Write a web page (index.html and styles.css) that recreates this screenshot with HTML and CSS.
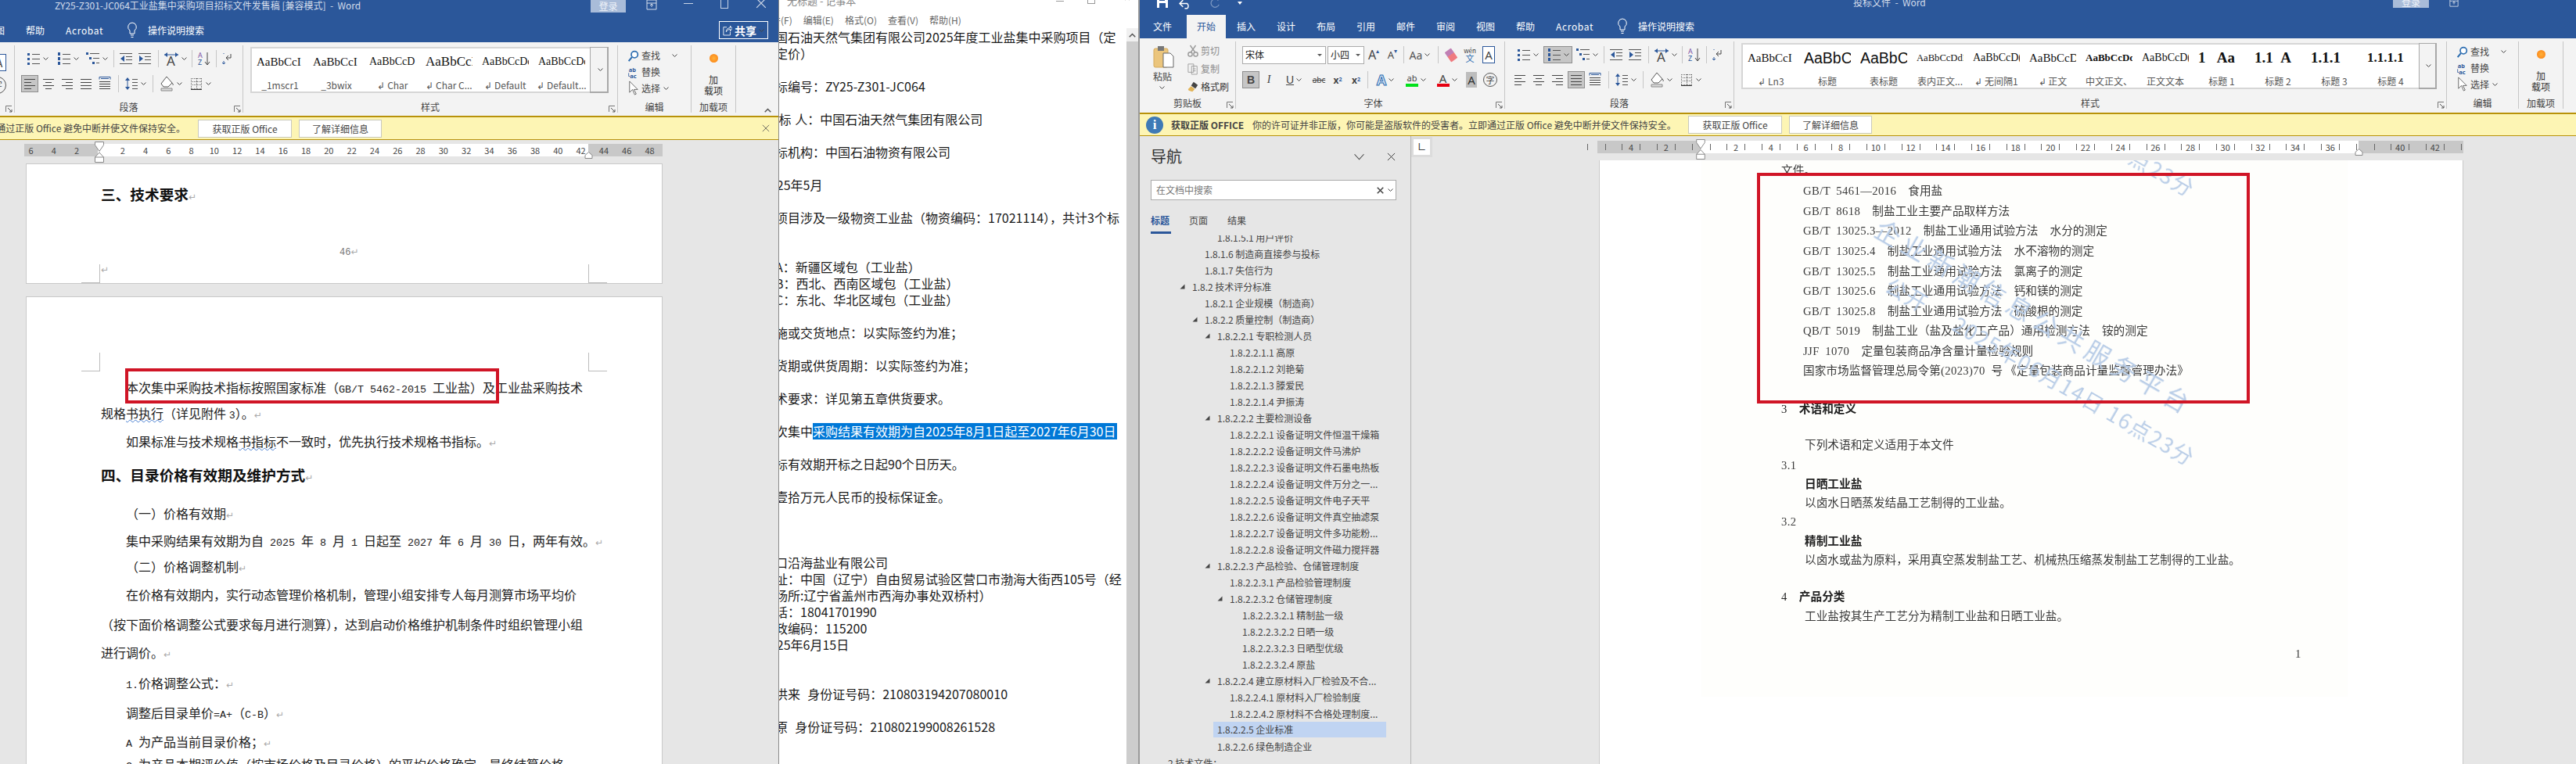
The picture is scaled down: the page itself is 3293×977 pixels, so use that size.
FILE: index.html
```html
<!DOCTYPE html>
<html lang="zh-CN">
<head>
<meta charset="utf-8">
<title>Word 与记事本</title>
<link rel="stylesheet" href="styles.css">
</head>
<body>
<svg class="defs" xmlns="http://www.w3.org/2000/svg">
  <symbol id="ch" viewBox="0 0 7 4"><path d="M.5.5 3.5 3.5 6.5.5" fill="none" stroke="#444" stroke-width="1"/></symbol>
  <symbol id="bul" viewBox="0 0 18 18"><g fill="#2b579a"><rect x="1" y="2" width="3" height="3"/><rect x="1" y="8" width="3" height="3"/><rect x="1" y="14" width="3" height="3"/></g><path d="M7 3.5h10M7 9.5h10M7 15.5h10" stroke="#555"/></symbol>
  <symbol id="num" viewBox="0 0 18 18"><g fill="#2b579a"><rect x="1" y="1" width="3" height="4"/><rect x="1" y="7" width="3" height="4"/><rect x="1" y="13" width="3" height="4"/></g><path d="M7 3.5h10M7 9.5h10M7 15.5h10" stroke="#555"/></symbol>
  <symbol id="mul" viewBox="0 0 18 18"><g fill="#2b579a"><rect x="0" y="1" width="3" height="3"/><rect x="4" y="7" width="3" height="3"/><rect x="8" y="13" width="3" height="3"/></g><path d="M5 2.5h12M9 8.5h8M13 14.5h4" stroke="#555"/></symbol>
  <symbol id="ind1" viewBox="0 0 18 18"><path d="M1 2.5h16M9 6.5h8M9 10.5h8M1 15.5h16" stroke="#555"/><path d="M7 5v8L2 9z" fill="#2b579a"/></symbol>
  <symbol id="ind2" viewBox="0 0 18 18"><path d="M1 2.5h16M9 6.5h8M9 10.5h8M1 15.5h16" stroke="#555"/><path d="M2 5v8l5-4z" fill="#2b579a"/></symbol>
  <symbol id="al" viewBox="0 0 18 18"><path d="M2 3.5h14M2 7.5h9M2 11.5h14M2 15.5h9" stroke="#444"/></symbol>
  <symbol id="ac" viewBox="0 0 18 18"><path d="M2 3.5h14M5 7.5h8M2 11.5h14M5 15.5h8" stroke="#444"/></symbol>
  <symbol id="ar" viewBox="0 0 18 18"><path d="M2 3.5h14M7 7.5h9M2 11.5h14M7 15.5h9" stroke="#444"/></symbol>
  <symbol id="aj" viewBox="0 0 18 18"><path d="M2 3.5h14M2 7.5h14M2 11.5h14M2 15.5h14" stroke="#444"/></symbol>
  <symbol id="ad" viewBox="0 0 18 18"><path d="M2 .5h14v3M2 .5v3" stroke="#2b579a" fill="none"/><path d="M2 6.5h14M2 9.5h14M2 12.5h14M2 15.5h14" stroke="#444"/><path d="M4 2.5h10" stroke="#2b579a"/></symbol>
  <symbol id="ls" viewBox="0 0 18 18"><path d="M4 2v14" stroke="#2b579a"/><path d="M1 5l3-4 3 4zM1 13l3 4 3-4z" fill="#2b579a"/><path d="M10 3.5h7M10 7.5h7M10 11.5h7M10 15.5h7" stroke="#555"/></symbol>
  <symbol id="sort" viewBox="0 0 18 18"><text x="1" y="8" class="svt sp">A</text><text x="1" y="17" class="svt sb">Z</text><path d="M13 1v15" stroke="#444"/><path d="M10 13l3 4 3-4" fill="none" stroke="#444"/></symbol>
  <symbol id="para" viewBox="0 0 18 18"><path d="M12 3v5H6M6 8l3-3M6 8l3 3" fill="none" stroke="#444"/><path d="M3 12v4M3 16l-2-2M3 16l2-2" fill="none" stroke="#2b579a"/><path d="M3 2v1" stroke="#2b579a"/></symbol>
  <symbol id="dir" viewBox="0 0 20 20"><text x="4" y="19" class="svt dk">A</text><path d="M1 5h18" stroke="#2b579a"/><path d="M5 2 1 5l4 3zM15 2l4 3-4 3z" fill="#2b579a"/></symbol>
  <symbol id="shd" viewBox="0 0 20 20"><path d="M10 1l7 8-5 5H6L3 10z" fill="#fff" stroke="#555"/><path d="M3 16h14v3H3z" fill="#ddd" stroke="#888"/><path d="M17 9q2 2 1 3" stroke="#555" fill="none"/></symbol>
  <symbol id="brd" viewBox="0 0 18 18"><path d="M2 2.5h14M2 6.5h14M2 10.5h14M2 15.5h14M2.5 2v14M9.5 2v14M15.5 2v14" stroke="#666" stroke-dasharray="1 1" fill="none"/><path d="M2 16.5h14" stroke="#333"/></symbol>
  <symbol id="find" viewBox="0 0 18 18"><circle cx="11" cy="7" r="5" fill="#fff" stroke="#2b6cb0" stroke-width="2"/><path d="M7 11 2 17" stroke="#2b6cb0" stroke-width="2.4"/></symbol>
  <symbol id="repl" viewBox="0 0 18 20"><text x="2" y="9" class="svt sv9">ab</text><text x="4" y="19" class="svt sv9">ac</text><path d="M2 11v5h2" fill="none" stroke="#2b579a"/></symbol>
  <symbol id="pick" viewBox="0 0 14 20"><path d="M2 1v15l4-4 3 7 2-1-3-6h5z" fill="#fff" stroke="#666"/></symbol>
  <symbol id="bulb" viewBox="0 0 14 22"><path d="M7 1a5.5 5.5 0 0 1 3 10v4H4v-4A5.5 5.5 0 0 1 7 1zM5 17h4M5.5 19.5h3" fill="none" stroke="#fff"/></symbol>
  <symbol id="lau" viewBox="0 0 9 9"><path d="M.5 8V.5H8" fill="none" stroke="#777"/><path d="M3 3l5 5M8 5v3H5" fill="none" stroke="#555"/></symbol>
  <symbol id="x" viewBox="0 0 12 12"><path d="M1 1l10 10M11 1 1 11" stroke="currentColor" fill="none"/></symbol>
  <symbol id="v" viewBox="0 0 12 12"><path d="M.5 3 6 9l5.5-6" stroke="currentColor" fill="none"/></symbol>
  <symbol id="up" viewBox="0 0 12 8"><path d="M1 7l5-5 5 5" stroke="currentColor" stroke-width="2" fill="none"/></symbol>
  <symbol id="tri" viewBox="0 0 7 7"><path d="M6.500 .5v6H.5z" fill="#444"/></symbol>
  <symbol id="hour" viewBox="0 0 12 27"><path d="M.5.5h11v4L6 12.500.5 4.500zM6 14l5.500 6v6.500H.5V20z" fill="#fff" stroke="#888"/><path d="M.5 20h11" stroke="#888"/></symbol>
  <symbol id="tab" viewBox="0 0 10 9"><path d="M5 .5 9.500 4.500v4h-9v-4z" fill="#fff" stroke="#888"/></symbol>
  <symbol id="paste" viewBox="0 0 28 29"><rect x="1" y="4" width="18" height="24" rx="2" fill="#ebc57c" stroke="#d4a95a"/><rect x="6" y="1" width="8" height="6" fill="#777"/><path d="M13 10h9l4 4v14H13z" fill="#fff" stroke="#666"/></symbol>
  <symbol id="cut" viewBox="0 0 16 18"><path d="M4 1l7 10M12 1 5 11" stroke="#999" stroke-width="1.6"/><circle cx="4" cy="14" r="3" fill="none" stroke="#999" stroke-width="1.6"/><circle cx="12" cy="14" r="3" fill="none" stroke="#999" stroke-width="1.6"/></symbol>
  <symbol id="copy" viewBox="0 0 16 18"><path d="M1 2h8v12H1zM6 5h8v12H6z" fill="#f3f3f3" stroke="#999"/><path d="M8 9h4M8 12h4" stroke="#999"/></symbol>
  <symbol id="brush" viewBox="0 0 18 18"><path d="M10 1l7 5-4 6-7-5z" fill="#444"/><path d="M6 8l6 5-4 4-6-2-1-2z" fill="#e2b458"/></symbol>
  <symbol id="save" viewBox="0 0 16 16"><path d="M1 1h11l3 3v11H1z" fill="#fff"/><path d="M4 1h7v5H4zM4 9h8v6H4z" fill="#2b579a"/></symbol>
  <symbol id="undo" viewBox="0 0 16 12"><path d="M5 1 1 5l4 4M1 5h9a4 4 0 0 1 0 6H7" fill="none" stroke="#fff" stroke-width="1.400"/></symbol>
  <symbol id="redo" viewBox="0 0 16 14"><path d="M13 2a6 6 0 1 0 1 6" fill="none" stroke="#7e9ac4" stroke-width="1.400"/></symbol>
  <symbol id="share" viewBox="0 0 14 16"><path d="M6 3H1v12h10v-5" fill="none" stroke="#fff"/><path d="M5 10c0-4 3-6 6-6V1l3 4-3 4V6C9 6 7 7 5 10z" fill="none" stroke="#fff"/></symbol>
  <symbol id="winrest" viewBox="0 0 14 14"><path d="M1 1h12v12H1zM1 5h12" fill="none" stroke="#d5deeb"/><path d="M7 10V6M5 8l2-2 2 2" fill="none" stroke="#d5deeb"/></symbol>
</svg>

<!-- 左侧 Word 窗口 -->
<section class="win wleft">
  <div class="ttl ttl-l">
    <span class="doc-name">ZY25-Z301-JC064工业盐集中采购项目招标文件发售稿 [兼容模式]  -  Word</span>
    <span class="login">登录</span>
    <svg class="ctl c-rest"><use href="#winrest"/></svg>
    <i class="ctl-min"></i>
    <i class="ctl-max"></i>
    <svg class="ctl c-x"><use href="#x"/></svg>
  </div>
  <div class="tabs tabs-l">
    <span class="tab t-cut">视图</span>
    <span class="tab">帮助</span>
    <span class="tab acro">Acrobat</span>
    <svg class="bulb"><use href="#bulb"/></svg>
    <span class="tell">操作说明搜索</span>
    <span class="sharebtn"><svg class="shi"><use href="#share"/></svg><b>共享</b><svg class="shc"><use href="#ch"/></svg></span>
  </div>
  <div class="ribbon">
    <div class="grp g-cut">
      <span class="cutbox">A</span>
      <span class="cutcirc">字</span>
      <svg class="lau"><use href="#lau"/></svg>
    </div>
    <div class="grp g-para">
      <div class="r r1">
        <span class="b w40"><svg class="ic"><use href="#bul"/></svg><svg class="chv"><use href="#ch"/></svg></span>
        <span class="b w37"><svg class="ic"><use href="#num"/></svg><svg class="chv"><use href="#ch"/></svg></span>
        <span class="b w37"><svg class="ic"><use href="#mul"/></svg><svg class="chv"><use href="#ch"/></svg></span>
        <i class="sep s7"></i>
        <span class="b w24"><svg class="ic"><use href="#ind1"/></svg></span>
        <span class="b w24"><svg class="ic"><use href="#ind2"/></svg></span>
        <i class="sep s10"></i>
        <span class="b w33"><svg class="ic20"><use href="#dir"/></svg><svg class="chv"><use href="#ch"/></svg></span>
        <i class="sep s11"></i>
        <span class="b w20"><svg class="ic"><use href="#sort"/></svg></span>
        <i class="sep s11"></i>
        <span class="b w20"><svg class="ic"><use href="#para"/></svg></span>
      </div>
      <div class="r r2">
        <span class="b w24"><span class="selbox"><svg class="ic"><use href="#al"/></svg></span></span>
        <span class="b w24"><svg class="ic"><use href="#ac"/></svg></span>
        <span class="b w24"><svg class="ic"><use href="#ar"/></svg></span>
        <span class="b w24"><svg class="ic"><use href="#aj"/></svg></span>
        <span class="b w24"><svg class="ic"><use href="#ad"/></svg></span>
        <i class="sep s10"></i>
        <span class="b w34"><svg class="ic"><use href="#ls"/></svg><svg class="chv"><use href="#ch"/></svg></span>
        <i class="sep s10"></i>
        <span class="b w35"><svg class="ic20"><use href="#shd"/></svg><svg class="chv"><use href="#ch"/></svg></span>
        <i class="gap4"></i>
        <span class="b w33"><svg class="ic"><use href="#brd"/></svg><svg class="chv"><use href="#ch"/></svg></span>
      </div>
      <div class="lab">段落</div>
      <svg class="lau"><use href="#lau"/></svg>
    </div>
    <div class="grp g-styles-l">
      <div class="gal">
        <div class="it"><span class="smp">AaBbCcI</span><span class="cap">_1mscr1</span></div>
        <div class="it"><span class="smp">AaBbCcI</span><span class="cap">_3bwix</span></div>
        <div class="it"><span class="smp sm14">AaBbCcD</span><span class="cap">↲ Char</span></div>
        <div class="it"><span class="smp sm17">AaBbCcI</span><span class="cap">↲ Char C...</span></div>
        <div class="it"><span class="smp sm14">AaBbCcDc</span><span class="cap">↲ Default</span></div>
        <div class="it"><span class="smp sm14">AaBbCcDd</span><span class="cap">↲ Default...</span></div>
        <div class="gscroll"><svg class="chv"><use href="#ch"/></svg></div>
      </div>
      <div class="lab">样式</div>
      <svg class="lau"><use href="#lau"/></svg>
    </div>
    <div class="grp g-edit-l">
      <div class="ed">
        <div class="edr"><svg class="edi"><use href="#find"/></svg><span>查找</span><svg class="chv ec1"><use href="#ch"/></svg></div>
        <div class="edr"><svg class="edi"><use href="#repl"/></svg><span>替换</span></div>
        <div class="edr"><svg class="edi"><use href="#pick"/></svg><span>选择</span><svg class="chv"><use href="#ch"/></svg></div>
      </div>
      <div class="lab">编辑</div>
    </div>
    <div class="grp g-add">
      <div class="addin"><i class="dot"></i><span>加</span><span>载项</span></div>
      <div class="lab">加载项</div>
    </div>
    <svg class="collapse"><use href="#up"/></svg>
  </div>
  <div class="notice n-l">
    <div class="nmsg-l"><span>立即通过正版 Office 避免中断并使文件保持安全。</span></div>
    <span class="nbtn nb1">获取正版 Office</span>
    <span class="nbtn nb2">了解详细信息</span>
    <svg class="nx"><use href="#x"/></svg>
  </div>
  <div class="doc-l">
    <div class="ruler rul-l">
      <div class="cells cl">
        <span>6</span><span>4</span><span>2</span><span></span><span>2</span><span>4</span><span>6</span><span>8</span><span>10</span><span>12</span><span>14</span><span>16</span><span>18</span><span>20</span><span>22</span><span>24</span><span>26</span><span>28</span><span>30</span><span>32</span><span>34</span><span>36</span><span>38</span><span>40</span><span>42</span><span>44</span><span>46</span><span>48</span>
      </div>
      <svg class="hour hl"><use href="#hour"/></svg>
      <svg class="tabm tl"><use href="#tab"/></svg>
    </div>
    <div class="page p1">
      <div class="h18">三、技术要求<span class="r-m">↵</span></div>
      <div class="pnum">46<span class="r-m">↵</span></div>
      <div class="pret"><span class="r-m">↵</span></div>
      <i class="crop c-tl"></i><i class="crop c-tr"></i>
    </div>
    <div class="page p2">
      <i class="crop c-bl"></i><i class="crop c-br"></i>
      <div class="ls">
        <p class="ind">本次集中采购技术指标按照国家标准（<span class="m">GB/T 5462-2015 </span>工业盐）及工业盐采购技术</p>
        <p>规格<u>书执行</u>（详见附件 <span class="m">3</span>）。<span class="r-m">↵</span></p>
        <p class="ind">如果标准与技术规格<u>书指标</u>不一致时，优先执行技术规格书指标。<span class="r-m">↵</span></p>
        <p class="h18">四、目录价格有效期及维护方式<span class="r-m">↵</span></p>
        <p class="ind">（一）价格有效期<span class="r-m">↵</span></p>
        <p class="ind">集中采购结果有效期为自<span class="m"> 2025 </span>年<span class="m"> 8 </span>月<span class="m"> 1 </span>日起至<span class="m"> 2027 </span>年<span class="m"> 6 </span>月<span class="m"> 30 </span>日，两年有效。<span class="r-m">↵</span></p>
        <p class="ind">（二）价格调整机制<span class="r-m">↵</span></p>
        <p class="ind">在价格有效期内，实行动态管理价格机制，管理小组安排专人每月测算市场平均价</p>
        <p>（按下面价格调整公式要求每月进行测算），达到启动价格维护机制条件时组织管理小组</p>
        <p>进行调价。<span class="r-m">↵</span></p>
        <p class="ind"><span class="m">1.</span>价格调整公式：<span class="r-m">↵</span></p>
        <p class="ind">调整后目录单价<span class="m">=A+</span>（<span class="m">C-B</span>）<span class="r-m">↵</span></p>
        <p class="ind"><span class="m">A </span>为产品当前目录价格；<span class="r-m">↵</span></p>
        <p class="ind"><span class="m">C </span>为产品本期评价值（按市场价格及目录价格）的平均价格确定，最终结算价格</p>
      </div>
      <div class="redbox rb-l"></div>
    </div>
  </div>
</section>

<!-- 记事本 -->
<section class="win wnote">
  <div class="ntitle">
    <span class="ntxt">无标题 - 记事本</span>
    <i class="nmin"></i><i class="nmax"></i>
    <svg class="nclose"><use href="#x"/></svg>
  </div>
  <div class="nmenu"><span class="mcut">文件(F)</span><span>编辑(E)</span><span>格式(O)</span><span>查看(V)</span><span>帮助(H)</span></div>
  <div class="nbody">
    <div class="ntext"><pre class="npre">中国石油天然气集团有限公司2025年度工业盐集中采购项目（定
额定价）

招标编号：ZY25-Z301-JC064

招 标 人：中国石油天然气集团有限公司

招标机构：中国石油物资有限公司

2025年5月

本项目涉及一级物资工业盐（物资编码：17021114），共计3个标


包A：新疆区域包（工业盐）
包B：西北、西南区域包（工业盐）
包C：东北、华北区域包（工业盐）

实施或交货地点：以实际签约为准；

交货期或供货周期：以实际签约为准；

技术要求：详见第五章供货要求。

本次集中<span class="npsel">采购结果有效期为自2025年8月1日起至2027年6月30日</span>

投标有效期开标之日起90个日历天。

交壹拾万元人民币的投标保证金。



营口沿海盐业有限公司
地址：中国（辽宁）自由贸易试验区营口市渤海大街西105号（经
营场所:辽宁省盖州市西海办事处双桥村）
电话：18041701990
邮政编码：115200
2025年6月15日


王洪来  身份证号码：210803194207080010

高原  身份证号码：210802199008261528</pre></div>
    <div class="nscroll"><div class="nup"><svg class="nupi"><use href="#up"/></svg></div></div>
  </div>
</section>

<!-- 右侧 Word 窗口 -->
<section class="win wright">
  <div class="ttl ttl-r">
    <svg class="qsave"><use href="#save"/></svg>
    <svg class="qundo"><use href="#undo"/></svg>
    <svg class="qredo"><use href="#redo"/></svg>
    <i class="qdrop"></i>
    <span class="doc-name2">投标文件  -  Word</span>
    <span class="login2">登录</span>
    <svg class="ctl2"><use href="#winrest"/></svg>
  </div>
  <div class="tabs tabs-r">
    <span class="tab t-file">文件</span>
    <span class="tab active">开始</span>
    <span class="tab">插入</span><span class="tab">设计</span><span class="tab">布局</span><span class="tab">引用</span><span class="tab">邮件</span><span class="tab">审阅</span><span class="tab">视图</span><span class="tab">帮助</span>
    <span class="tab acro">Acrobat</span>
    <svg class="bulb"><use href="#bulb"/></svg>
    <span class="tell">操作说明搜索</span>
  </div>
  <div class="ribbon rib-r">
    <div class="grp g-clip">
      <div class="clip">
        <div class="pastec">
          <svg class="pasteic"><use href="#paste"/></svg>
          <span class="pastet">粘贴</span>
          <svg class="chv pastech"><use href="#ch"/></svg>
        </div>
        <div class="clipc">
          <div class="cr dis"><svg class="ci"><use href="#cut"/></svg>剪切</div>
          <div class="cr dis"><svg class="ci"><use href="#copy"/></svg>复制</div>
          <div class="cr"><svg class="ci"><use href="#brush"/></svg>格式刷</div>
        </div>
      </div>
      <div class="lab">剪贴板</div>
      <svg class="lau"><use href="#lau"/></svg>
    </div>
    <div class="grp g-font">
      <div class="r fr1">
        <span class="fbox fb1"><span>宋体</span><i class="tridown"></i></span>
        <span class="fbox fb2"><span>小四</span><i class="tridown"></i></span>
        <span class="b w24"><span class="fa a-g">A<sup>▴</sup></span></span>
        <span class="b w24"><span class="fa a-s">A<sup>▾</sup></span></span>
        <i class="sep s4"></i>
        <span class="b w38"><span class="aa">Aa</span><svg class="chv"><use href="#ch"/></svg></span>
        <i class="sep s9"></i>
        <span class="b w24"><i class="eraser"></i></span>
        <span class="b w24"><span class="wen"><small>wén</small>文</span></span>
        <span class="b w24"><span class="boxa">A</span></span>
      </div>
      <div class="r fr2">
        <span class="b w22"><span class="selbox fs">B</span></span>
        <span class="b w24 ft i">I</span>
        <span class="b w40"><span class="ft un">U</span><svg class="chv"><use href="#ch"/></svg></span>
        <span class="b w24"><span class="st">abc</span></span>
        <span class="b w24 ft2">x<sub>2</sub></span>
        <span class="b w23 ft2">x<sup>2</sup></span>
        <i class="sep s7"></i>
        <span class="b w38"><span class="aglow">A</span><svg class="chv"><use href="#ch"/></svg></span>
        <span class="b w40"><span class="hilite">ab<i class="gb"></i></span><svg class="chv"><use href="#ch"/></svg></span>
        <span class="b w39"><span class="hired">A<i class="rb"></i></span><svg class="chv"><use href="#ch"/></svg></span>
        <span class="b w24"><span class="shadea">A</span></span>
        <span class="b w24"><span class="circ">字</span></span>
      </div>
      <div class="lab">字体</div>
      <svg class="lau"><use href="#lau"/></svg>
    </div>
    <div class="grp g-para g-para-r">
      <div class="r r1">
        <span class="b w40"><svg class="ic"><use href="#bul"/></svg><svg class="chv"><use href="#ch"/></svg></span>
        <span class="b w37"><span class="selbox sb2"><svg class="ic"><use href="#num"/></svg><svg class="chv"><use href="#ch"/></svg></span></span>
        <span class="b w37"><svg class="ic"><use href="#mul"/></svg><svg class="chv"><use href="#ch"/></svg></span>
        <i class="sep s7"></i>
        <span class="b w24"><svg class="ic"><use href="#ind1"/></svg></span>
        <span class="b w24"><svg class="ic"><use href="#ind2"/></svg></span>
        <i class="sep s10"></i>
        <span class="b w33"><svg class="ic20"><use href="#dir"/></svg><svg class="chv"><use href="#ch"/></svg></span>
        <i class="sep s11"></i>
        <span class="b w20"><svg class="ic"><use href="#sort"/></svg></span>
        <i class="sep s11"></i>
        <span class="b w20"><svg class="ic"><use href="#para"/></svg></span>
      </div>
      <div class="r r2">
        <span class="b w24"><svg class="ic"><use href="#al"/></svg></span>
        <span class="b w24"><svg class="ic"><use href="#ac"/></svg></span>
        <span class="b w24"><svg class="ic"><use href="#ar"/></svg></span>
        <span class="b w24"><span class="selbox"><svg class="ic"><use href="#aj"/></svg></span></span>
        <span class="b w24"><svg class="ic"><use href="#ad"/></svg></span>
        <i class="sep s10"></i>
        <span class="b w34"><svg class="ic"><use href="#ls"/></svg><svg class="chv"><use href="#ch"/></svg></span>
        <i class="sep s10"></i>
        <span class="b w35"><svg class="ic20"><use href="#shd"/></svg><svg class="chv"><use href="#ch"/></svg></span>
        <i class="gap4"></i>
        <span class="b w33"><svg class="ic"><use href="#brd"/></svg><svg class="chv"><use href="#ch"/></svg></span>
      </div>
      <div class="lab">段落</div>
      <svg class="lau"><use href="#lau"/></svg>
    </div>
    <div class="grp g-styles-r">
      <div class="gal">
        <div class="it"><span class="smp">AaBbCcI</span><span class="cap">↲ Ln3</span></div>
        <div class="it"><span class="smp sm20">AaBbC(</span><span class="cap">标题</span></div>
        <div class="it"><span class="smp sm20">AaBbC</span><span class="cap">表标题</span></div>
        <div class="it"><span class="smp sm12">AaBbCcDdI</span><span class="cap">表内正文...</span></div>
        <div class="it"><span class="smp sm14">AaBbCcD(</span><span class="cap">↲ 无间隔1</span></div>
        <div class="it"><span class="smp sm15">AaBbCcD</span><span class="cap">↲ 正文</span></div>
        <div class="it"><span class="smp sm12b">AaBbCcDd</span><span class="cap">中文正文、</span></div>
        <div class="it"><span class="smp sm14">AaBbCcD(</span><span class="cap">正文文本</span></div>
        <div class="it"><span class="smp sm19">1 &nbsp;&nbsp;Aa</span><span class="cap">标题 1</span></div>
        <div class="it"><span class="smp sm19">1.1 &nbsp;A</span><span class="cap">标题 2</span></div>
        <div class="it"><span class="smp sm19">1.1.1</span><span class="cap">标题 3</span></div>
        <div class="it"><span class="smp sm17b">1.1.1.1</span><span class="cap">标题 4</span></div>
        <div class="gscroll"><svg class="chv"><use href="#ch"/></svg></div>
      </div>
      <div class="lab">样式</div>
      <svg class="lau"><use href="#lau"/></svg>
    </div>
    <div class="grp g-edit-r">
      <div class="ed">
        <div class="edr"><svg class="edi"><use href="#find"/></svg><span>查找</span><svg class="chv ec1"><use href="#ch"/></svg></div>
        <div class="edr"><svg class="edi"><use href="#repl"/></svg><span>替换</span></div>
        <div class="edr"><svg class="edi"><use href="#pick"/></svg><span>选择</span><svg class="chv"><use href="#ch"/></svg></div>
      </div>
      <div class="lab">编辑</div>
    </div>
    <div class="grp g-add">
      <div class="addin"><i class="dot"></i><span>加</span><span>载项</span></div>
      <div class="lab">加载项</div>
    </div>
  </div>
  <div class="notice n-r">
    <span class="info">i</span>
    <b class="ntitle-b">获取正版 OFFICE</b>
    <span class="nmsg-r">你的许可证并非正版，你可能是盗版软件的受害者。立即通过正版 Office 避免中断并使文件保持安全。</span>
    <span class="nbtn nb1">获取正版 Office</span>
    <span class="nbtn nb2">了解详细信息</span>
  </div>
  <div class="rmain">
    <aside class="nav">
      <div class="navh"><span class="navt">导航</span><svg class="navv"><use href="#v"/></svg><svg class="navx"><use href="#x"/></svg></div>
      <div class="navs"><span>在文档中搜索</span><svg class="navsx"><use href="#x"/></svg><svg class="chv"><use href="#ch"/></svg></div>
      <div class="navtabs"><span class="on">标题</span><span>页面</span><span>结果</span></div>
      <div class="tree">
        <div class="row l5 first"><i class="slot"></i>1.8.1.5.1 用户评价</div>
        <div class="row l4"><i class="slot"></i>1.8.1.6 制造商直接参与投标</div>
        <div class="row l4"><i class="slot"></i>1.8.1.7 失信行为</div>
        <div class="row l3"><i class="slot"><svg class="tr"><use href="#tri"/></svg></i>1.8.2 技术评分标准</div>
        <div class="row l4"><i class="slot"></i>1.8.2.1 企业规模（制造商）</div>
        <div class="row l4"><i class="slot"><svg class="tr"><use href="#tri"/></svg></i>1.8.2.2 质量控制（制造商）</div>
        <div class="row l5"><i class="slot"><svg class="tr"><use href="#tri"/></svg></i>1.8.2.2.1 专职检测人员</div>
        <div class="row l6"><i class="slot"></i>1.8.2.2.1.1 高原</div>
        <div class="row l6"><i class="slot"></i>1.8.2.2.1.2 刘艳菊</div>
        <div class="row l6"><i class="slot"></i>1.8.2.2.1.3 滕爱民</div>
        <div class="row l6"><i class="slot"></i>1.8.2.2.1.4 尹振涛</div>
        <div class="row l5"><i class="slot"><svg class="tr"><use href="#tri"/></svg></i>1.8.2.2.2 主要检测设备</div>
        <div class="row l6"><i class="slot"></i>1.8.2.2.2.1 设备证明文件恒温干燥箱</div>
        <div class="row l6"><i class="slot"></i>1.8.2.2.2.2 设备证明文件马沸炉</div>
        <div class="row l6"><i class="slot"></i>1.8.2.2.2.3 设备证明文件石墨电热板</div>
        <div class="row l6"><i class="slot"></i>1.8.2.2.2.4 设备证明文件万分之一...</div>
        <div class="row l6"><i class="slot"></i>1.8.2.2.2.5 设备证明文件电子天平</div>
        <div class="row l6"><i class="slot"></i>1.8.2.2.2.6 设备证明文件真空抽滤泵</div>
        <div class="row l6"><i class="slot"></i>1.8.2.2.2.7 设备证明文件多功能粉...</div>
        <div class="row l6"><i class="slot"></i>1.8.2.2.2.8 设备证明文件磁力搅拌器</div>
        <div class="row l5"><i class="slot"><svg class="tr"><use href="#tri"/></svg></i>1.8.2.2.3 产品检验、仓储管理制度</div>
        <div class="row l6"><i class="slot"></i>1.8.2.2.3.1 产品检验管理制度</div>
        <div class="row l6"><i class="slot"><svg class="tr"><use href="#tri"/></svg></i>1.8.2.2.3.2 仓储管理制度</div>
        <div class="row l7"><i class="slot"></i>1.8.2.2.3.2.1 精制盐一级</div>
        <div class="row l7"><i class="slot"></i>1.8.2.2.3.2.2 日晒一级</div>
        <div class="row l7"><i class="slot"></i>1.8.2.2.3.2.3 日晒型优级</div>
        <div class="row l7"><i class="slot"></i>1.8.2.2.3.2.4 原盐</div>
        <div class="row l5"><i class="slot"><svg class="tr"><use href="#tri"/></svg></i>1.8.2.2.4 建立原材料入厂检验及不合...</div>
        <div class="row l6"><i class="slot"></i>1.8.2.2.4.1 原材料入厂检验制度</div>
        <div class="row l6"><i class="slot"></i>1.8.2.2.4.2 原材料不合格处理制度...</div>
        <div class="row rsel">1.8.2.2.5 企业标准</div>
        <div class="row l5"><i class="slot"></i>1.8.2.2.6 绿色制造企业</div>
        <div class="row l1"><i class="slot"></i>2 技术文件：</div>
      </div>
    </aside>
    <div class="docw">
      <div class="rtop">
        <span class="tabsel">∟</span>
        <div class="ruler rul-r">
          <div class="cells cr2">
            <span></span><span>4</span><span>2</span><span></span><span>2</span><span>4</span><span>6</span><span>8</span><span>10</span><span>12</span><span>14</span><span>16</span><span>18</span><span>20</span><span>22</span><span>24</span><span>26</span><span>28</span><span>30</span><span>32</span><span>34</span><span>36</span><span></span><span>40</span><span>42</span><span></span>
          </div>
          <svg class="hour hr"><use href="#hour"/></svg>
          <svg class="tabm trm"><use href="#tab"/></svg>
        </div>
      </div>
      <div class="page p3">
        <div class="scanbg"></div>
        <div class="scan">
          <p>文件。</p>
          <p class="i1"><span class="m2">GB/T 5461—2016  </span>食用盐</p>
          <p class="i1"><span class="m2">GB/T 8618  </span>制盐工业主要产品取样方法</p>
          <p class="i1"><span class="m2">GB/T 13025.3—2012  </span>制盐工业通用试验方法<span class="m2">  </span>水分的测定</p>
          <p class="i1"><span class="m2">GB/T 13025.4  </span>制盐工业通用试验方法<span class="m2">  </span>水不溶物的测定</p>
          <p class="i1"><span class="m2">GB/T 13025.5  </span>制盐工业通用试验方法<span class="m2">  </span>氯离子的测定</p>
          <p class="i1"><span class="m2">GB/T 13025.6  </span>制盐工业通用试验方法<span class="m2">  </span>钙和镁的测定</p>
          <p class="i1"><span class="m2">GB/T 13025.8  </span>制盐工业通用试验方法<span class="m2">  </span>硫酸根的测定</p>
          <p class="i1"><span class="m2">QB/T 5019  </span>制盐工业（盐及盐化工产品）通用检测方法<span class="m2">  </span>铵的测定</p>
          <p class="i1"><span class="m2">JJF 1070  </span>定量包装商品净含量计量检验规则</p>
          <p class="i1">国家市场监督管理总局令第<span class="m2">(2023)70 </span>号 《定量包装商品计量监督管理办法》</p>
          <p class="bd"><span class="m2">3  </span>术语和定义</p>
          <p class="i2">下列术语和定义适用于本文件</p>
          <p><span class="m2">3.1</span></p>
          <p class="i2 bd">日晒工业盐</p>
          <p class="i2">以卤水日晒蒸发结晶工艺制得的工业盐。</p>
          <p><span class="m2">3.2</span></p>
          <p class="i2 bd">精制工业盐</p>
          <p class="i2">以卤水或盐为原料，采用真空蒸发制盐工艺、机械热压缩蒸发制盐工艺制得的工业盐。</p>
          <p class="bd"><span class="m2">4  </span>产品分类</p>
          <p class="i2">工业盐按其生产工艺分为精制工业盐和日晒工业盐。</p>
          <p class="pg"><span class="m2">1</span></p>
        </div>
        <div class="wm wm-a">企业新潮信息公共服务平台</div>
        <div class="wm wm-b"><span class="wm-k">公开</span>2025年06月14日 16点23分</div>
        <div class="wm wm-c"><span class="wm-k">公开</span>2025年06月14日 16点23分</div>
        <div class="redbox rb-r"></div>
      </div>
    </div>
  </div>
</section>
</body>
</html>
```
FILE: styles.css
```css
* { box-sizing: border-box; }
html, body { margin: 0; padding: 0; }
body {
  width: 3293px; height: 977px; overflow: hidden; display: flex;
  font: 12px/16px "Noto Sans CJK SC", "Noto Sans", sans-serif; color: #333; background: #e6e6e6;
}
i { font-style: normal; }
.defs { position: absolute; width: 0; height: 0; }
.svt { font-family: "Noto Sans", sans-serif; }
.sp { font-size: 9px; fill: #7a4fa3; }
.sb { font-size: 9px; fill: #2b579a; }
.dk { font-size: 17px; fill: #444; }
.sv9 { font-size: 9px; fill: #2b579a; font-weight: 700; }

.win { height: 977px; display: flex; flex-direction: column; overflow: hidden; flex: none; }
.wleft { width: 996px; border-right: 1px solid #8a8a8a; }
.wnote { width: 461px; background: #fff; border-right: 2px solid #9a9a9a; }
.wright { width: 1836px; }

/* title rows */
.ttl { background: #2b579a; color: #d3dcea; display: flex; overflow: hidden; flex: none; align-items: flex-start; }
.ttl-l { height: 23px; }
.ttl-r { height: 19px; }
.doc-name { margin: -2px 0 0 70px; width: 685px; white-space: pre; line-height: 18px; }
.login { width: 45px; height: 16px; background: #a9bcd9; color: #eef2f8; text-align: center; line-height: 16px; }
.ctl { width: 14px; height: 14px; }
.c-rest { margin: -1px 0 0 26px; }
.ctl-min { width: 12px; height: 1px; background: #c8d4e6; margin: 4px 0 0 34px; }
.ctl-max { width: 10px; height: 11px; border: 1px solid #c8d4e6; border-top: 0; margin: 0 0 0 35px; }
.c-x { margin: -3px 0 0 35px; color: #d3dcea; }
.qsave { width: 16px; height: 16px; margin: -5px 0 0 21px; }
.qundo { width: 17px; height: 13px; margin: -1px 0 0 13px; }
.qredo { width: 14px; height: 14px; margin: -2px 0 0 22px; }
.qdrop { width: 0; height: 0; margin: 2px 0 0 22px; border: 3px solid transparent; border-top: 4px solid #fff; }
.doc-name2 { margin: -6px 0 0 781px; width: 690px; white-space: pre; line-height: 18px; }
.login2 { width: 46px; height: 10px; margin-left: 0; background: #a9bcd9; color: #eef2f8; text-align: center; line-height: 6px; }
.ctl2 { width: 14px; height: 12px; margin: -3px 0 0 25px; }

/* tabs */
.tabs { background: #2b579a; color: #fff; display: flex; align-items: center; flex: none; position: relative; }
.tabs-l { height: 31px; }
.tabs-r { height: 30px; }
.tab { width: 50px; margin-right: 1px; text-align: center; line-height: 30px; flex: none; }
.t-cut { margin-left: -31px; }
.t-file { margin: 0 6px 0 4px; }
.active { background: #f3f3f3; color: #2b579a; }
.acro { width: auto; padding-left: 13px; letter-spacing: .65px; text-align: left; }
.bulb { width: 14px; height: 22px; margin-left: 29px; flex: none; }
.tell { margin-left: 13px; white-space: nowrap; }
.sharebtn {
  position: absolute; left: 919px; top: 4px; width: 63px; height: 23px; border: 1px solid #fff;
  display: flex; align-items: center; font-size: 14px; color: #fff;
}
.shi { width: 12px; height: 14px; margin: 0 3px 0 4px; }
.shc { width: 7px; height: 4px; margin-left: 3px; }
.shc use { color: #fff; }

/* ribbon */
.ribbon { height: 94px; background: #f3f3f3; display: flex; flex: none; position: relative; }
.rib-r { height: 95px; }
.grp {
  height: 86px; margin-top: 4px; padding-top: 1px; border-right: 1px solid #c6c6c6; flex: none;
  display: grid; grid-template-rows: 32px 32px 21px; position: relative; color: #444;
}
.g-cut { width: 19px; }
.g-para { width: 292px; }
.g-para-r { width: 293px; }
.g-styles-l { width: 479px; }
.g-styles-r { width: 911px; }
.g-edit-l { width: 94px; }
.g-edit-r { width: 92px; }
.g-add { width: 57px; }
.g-clip { width: 123px; }
.g-font { width: 344px; padding-left: 8px; }
.lab { grid-row: 3; line-height: 28px; height: 21px; text-align: center; color: #444; white-space: nowrap; }
.lau { position: absolute; right: 2px; bottom: 0; width: 9px; height: 9px; }
.cutbox { position: absolute; left: -10px; top: 11px; width: 18px; height: 22px; border: 1px solid #2b579a; text-align: center; line-height: 20px; font-size: 14px; background: #fff; }
.cutcirc { position: absolute; left: -14px; top: 40px; width: 22px; height: 22px; border: 1px solid #555; border-radius: 50%; text-align: center; line-height: 20px; }
.collapse { position: absolute; left: 977px; top: 84px; width: 9px; height: 6px; color: #555; }

.r { display: flex; align-items: center; }
.r1 { padding-left: 9px; }
.r2 { padding-left: 7px; }
.b { display: flex; align-items: center; justify-content: center; height: 24px; flex: none; }
.w20 { width: 20px; } .w22 { width: 22px; } .w23 { width: 23px; } .w24 { width: 24px; } .w33 { width: 33px; }
.w34 { width: 34px; } .w35 { width: 35px; } .w37 { width: 37px; } .w38 { width: 38px; } .w39 { width: 39px; } .w40 { width: 40px; }
.ic { width: 18px; height: 18px; flex: none; }
.ic20 { width: 20px; height: 20px; flex: none; }
.chv { width: 7px; height: 4px; margin-left: 3px; flex: none; }
.sep { display: block; height: 22px; flex: none; background: linear-gradient(#c6c6c6, #c6c6c6) center / 1px 100% no-repeat; }
.s4 { width: 4px; } .s7 { width: 7px; } .s9 { width: 9px; } .s10 { width: 10px; } .s11 { width: 11px; }
.gap4 { width: 4px; flex: none; }
.selbox { width: 22px; height: 22px; background: #c6c6c6; border: 1px solid #8e8e8e; display: flex; align-items: center; justify-content: center; }
.sb2 { width: 37px; }
.fs { font-weight: 700; font-size: 14px; font-family: "Liberation Sans", sans-serif; }

/* gallery */
.gal { grid-row: 1 / 3; margin: 1px 0 0 9px; height: 59px; background: #fff; border: solid #d6d6d6; border-width: 2px 0 2px 2px; display: flex; align-self: start; position: relative; }
.g-styles-l .gal { width: 458px; }
.g-styles-r .gal { width: 889px; }
.it { width: 72px; flex: none; display: flex; flex-direction: column; align-items: center; }
.smp { width: 60px; height: 30px; margin-top: 2px; overflow: hidden; white-space: nowrap; color: #111; font: 15px/30px "Liberation Serif", serif; text-align: left; }
.cap { margin-top: 7px; line-height: 16px; color: #555; white-space: nowrap; }
.sm12 { font-size: 12.6px; }
.sm12b { font-size: 13px; font-weight: 700; }
.sm14 { font-size: 14px; }
.sm15 { font-size: 15px; }
.sm17 { font-size: 17px; }
.sm17b { font-size: 17px; font-weight: 700; }
.sm19 { font-size: 19px; font-weight: 700; }
.sm20 { font-size: 19.500px; font-family: "Liberation Sans", sans-serif; }
.gscroll { flex: 1; margin: -2px 0; border: 2px solid #a8a8a8; border-width: 1px 2px 2px 1px; background: #f3f3f3; display: flex; align-items: center; justify-content: center; }

/* edit + add-in */
.ed { grid-row: 1 / 3; display: flex; flex-direction: column; margin-top: 2px; }
.edr { display: flex; align-items: center; height: 23px; padding-left: 12px; }
.edr .chv { margin-left: 4px; }
.edr .ec1 { margin-left: 15px; }
.edi { width: 15px; height: 19px; margin-right: 3px; flex: none; }
.addin { grid-row: 1 / 3; display: flex; flex-direction: column; align-items: center; line-height: 14px; color: #333; padding-top: 10px; }
.addin span:first-of-type { margin-top: 15px; }
.dot { width: 11px; height: 11px; border-radius: 50%; background: radial-gradient(#ffb03a, #fb7d10); }

/* clipboard */
.clip { grid-row: 1 / 3; display: flex; padding-left: 17px; }
.pastec { width: 44px; display: flex; flex-direction: column; align-items: flex-start; }
.pasteic { width: 28px; height: 29px; margin-top: 4px; }
.pastet { margin-top: 3px; line-height: 16px; }
.pastech { margin: 4px 0 0 8px; }
.clipc { margin-top: -1px; }
.cr { height: 23px; display: flex; align-items: center; white-space: nowrap; color: #333; }
.dis { color: #8c8c8c; }
.ci { width: 14px; height: 16px; margin-right: 3px; flex: none; }

/* font group */
.fbox { height: 23px; background: #fff; border: 1px solid #ababab; display: flex; align-items: center; justify-content: space-between; padding: 0 4px 0 3px; flex: none; color: #222; }
.fb1 { width: 107px; margin-right: 2px; }
.fb2 { width: 47px; }
.tridown { width: 0; height: 0; border: 3px solid transparent; border-top: 3px solid #555; margin-top: 3px; }
.fa { font: 16px/18px "Noto Sans", sans-serif; color: #444; display: flex; }
.a-s { font-size: 13px; }
.fa sup { font-size: 8px; line-height: 8px; color: #2b579a; }
.aa { font: 14px "Noto Sans", sans-serif; color: #555; }
.eraser { width: 10px; height: 15px; background: linear-gradient(#c07fb4 45%, #ef7a7f 45%); transform: rotate(-35deg); border-radius: 1px; }
.wen { display: flex; flex-direction: column; align-items: center; font-size: 11px; line-height: 11px; color: #2b6cb0; }
.wen small { font-size: 8px; line-height: 8px; color: #333; }
.boxa { width: 16px; height: 22px; border: 1px solid #2b579a; text-align: center; line-height: 20px; font: 15px/20px "Noto Sans", sans-serif; background: #fff; color: #444; }
.ft { font: 14px "Liberation Serif", serif; color: #444; }
.i { font-style: italic; }
.un { text-decoration: underline; font-family: "Liberation Sans", sans-serif; }
.st { font: 10px "Noto Sans", sans-serif; text-decoration: line-through; color: #444; }
.ft2 { font: 700 12px "Noto Sans", sans-serif; color: #444; }
.ft2 sub, .ft2 sup { font-size: 7px; line-height: 0; color: #2b579a; }
.aglow { font: 700 18px "Noto Sans", sans-serif; color: #dbe7f6; -webkit-text-stroke: 1px #2b6cb0; }
.hilite, .hired { display: flex; flex-direction: column; align-items: center; font: 11px/14px "Noto Sans", sans-serif; color: #444; width: 16px; }
.hired { font-size: 15px; }
.gb, .rb { display: block; width: 16px; height: 4px; background: #00e11a; }
.rb { background: #e60012; }
.shadea { width: 14px; height: 20px; background: #bdbdbd; text-align: center; font: 15px/20px "Noto Sans", sans-serif; color: #333; }
.circ { width: 18px; height: 18px; border: 1px solid #555; border-radius: 50%; text-align: center; line-height: 16px; font-size: 11px; }

/* notice */
.notice { background: #fdf5b4; border: solid #b8920a; border-width: 2px 0 1px; display: flex; align-items: center; color: #444; flex: none; }
.n-l { height: 31px; }
.n-r { height: 30px; padding-left: 8px; }
.nmsg-l { width: 237px; margin-right: 16px; overflow: hidden; display: flex; justify-content: flex-end; white-space: nowrap; flex: none; }
.nbtn { height: 23px; line-height: 21px; background: #fff; border: 1px solid #c9c9bd; text-align: center; flex: none; white-space: nowrap; }
.nb1 { width: 120px; margin-right: 9px; }
.nb2 { width: 106px; }
.nx { width: 10px; height: 12px; margin-left: 486px; color: #555; }
.info { width: 22px; height: 22px; border-radius: 50%; background: #3f7ab6; color: #fff; text-align: center; font: 700 17px/22px "Liberation Serif", serif; flex: none; margin-right: 10px; }
.ntitle-b { width: 104px; flex: none; color: #444; white-space: nowrap; }
.nmsg-r { width: 557px; flex: none; white-space: nowrap; }

/* left document */
.doc-l { flex: 1; padding-left: 33px; overflow: hidden; background: #e6e6e6; }
.ruler { position: relative; font-size: 11px; color: #444; height: 16px; }
.rul-l { width: 816px; margin: 5px 0 0 -2px; background: linear-gradient(90deg, #c8c8c8 94px, #fff 94px, #fff 721px, #c8c8c8 721px); }
.rul-r { width: 1107px; margin: 6px 0 0 214px; background: linear-gradient(90deg, #c8c8c8 131.600px, #fff 131.600px, #fff 973px, #c8c8c8 973px); }
.cells { display: flex; overflow: hidden; line-height: 16px; text-align: center; height: 16px; }
.cl { margin-left: -6.150px; width: 822px; }
.cl span { width: 29.300px; flex: none; }
.cr2 { margin-left: -24px; width: 1131px; }
.cr2 span {
  width: 44.700px; flex: none;
  background: linear-gradient(#666, #666) 10.500px 4px / 1px 8px no-repeat, linear-gradient(#666, #666) 33.500px 4px / 1px 8px no-repeat;
}
.hour { position: absolute; width: 12px; height: 27px; }
.hl { left: 90px; top: -3px; }
.hr { left: 126px; top: -2px; height: 26px; }
.tabm { position: absolute; width: 11px; height: 9px; }
.tl { left: 716px; top: 10px; }
.trm { left: 968px; top: 10px; }

.page { background: #fff; border: 1px solid #c9c9c9; position: relative; overflow: hidden; }
.p1 { width: 814px; height: 154px; margin-top: 9px; padding: 26px 0 0 95px; }
.p2 { width: 814px; height: 640px; margin-top: 16px; padding: 103px 0 0 95px; }
.h18 { font-size: 18.670px; font-weight: 700; line-height: 24px; color: #111; white-space: nowrap; }
.r-m { color: #aaa; font-size: 12px; font-weight: 400; font-family: "DejaVu Sans", sans-serif; }
.pnum { margin: 46px 0 0 305px; font-size: 12px; line-height: 24px; color: #777; font-family: "Liberation Mono", monospace; }
.pret { line-height: 14px; margin-top: 2px; }
.crop { position: absolute; width: 24px; height: 24px; border: 0 solid #bcbcbc; }
.c-tl { left: 70px; top: 128px; border-width: 0 1px 1px 0; }
.c-tr { left: 718px; top: 128px; border-width: 0 0 1px 1px; }
.c-bl { left: 70px; top: 71px; border-width: 0 1px 1px 0; }
.c-br { left: 718px; top: 71px; border-width: 0 0 1px 1px; }
.ls {
  display: grid; font-size: 16px; color: #222;
  grid-template-rows: 33px 35.500px 43.500px 49px 35px 33px 36px 38px 36px 39px 37.500px 37.500px 29px 24px;
}
.ls p { margin: 0; line-height: 24px; height: 24px; white-space: pre; }
.ind { padding-left: 32px; }
.ls u { text-decoration: underline wavy #4a7fd0 1px; }
.m { font-family: "Liberation Mono", monospace; font-size: 13.330px; }
.redbox { position: absolute; border: 4px solid #d01526; }
.rb-l { left: 126px; top: 91px; width: 478px; height: 45px; }
.rb-r { left: 201px; top: 16px; width: 630px; height: 295px; }

/* notepad */
.ntitle { height: 16px; display: flex; flex: none; overflow: hidden; color: #888; }
.ntxt { margin: -7px 0 0 10px; width: 344px; line-height: 16px; font-size: 13px; }
.nmin { width: 10px; height: 1px; background: #999; margin: 1px 0 0 0; }
.nmax { width: 10px; height: 5px; border: 1px solid #999; border-top: 0; margin-left: 30px; }
.nclose { width: 10px; height: 6px; margin: -5px 0 0 36px; color: #888; }
.nmenu { height: 18px; flex: none; display: flex; color: #666; line-height: 20px; white-space: nowrap; margin-bottom: 2px; }
.nmenu span { margin-right: 14px; }
.mcut { margin-left: -22px; margin-right: 15px; }
.nbody { flex: 1; display: flex; overflow: hidden; min-height: 0; background: #f0f0f0; }
.ntext { flex: 1; min-width: 0; padding: 1px 0 0 0; background: #fff; overflow: hidden; }
.npre {
  margin: 0 0 0 -21px; font: 16px/21px "Noto Sans CJK SC", sans-serif; color: #1a1a1a; word-spacing: 1px; white-space: pre;
}
.npsel { display: inline-block; height: 21px; background: #0078d7; color: #fff; vertical-align: top; padding-right: 2px; }
.nscroll { width: 15px; flex: none; background: #cdcdcd; }
.nup { height: 17px; background: #f0f0f0; display: flex; align-items: center; justify-content: center; }
.nupi { width: 9px; height: 6px; color: #555; }

/* right lower */
.rmain { flex: 1; min-height: 0; display: flex; }
.nav { width: 347px; flex: none; border-right: 1px solid #b4b4b4; padding-left: 14px; background: #e6e6e6; display: flex; flex-direction: column; overflow: hidden; }
.navh { display: flex; align-items: center; margin-top: 12px; height: 28px; flex: none; }
.navt { font-size: 20px; line-height: 28px; color: #333; }
.navv { width: 13px; height: 13px; margin-left: 220px; color: #444; }
.navx { width: 11px; height: 11px; margin-left: 29px; color: #333; }
.navs { width: 314px; height: 26px; margin-top: 16px; flex: none; background: #fff; border: 1px solid #ababab; display: flex; align-items: center; padding: 0 3px 0 6px; color: #777; }
.navs span { flex: 1; }
.navsx { width: 9px; height: 9px; color: #444; stroke-width: 2; }
.navs .chv { margin-left: 5px; }
.navtabs { display: flex; gap: 25px; margin-top: 16px; flex: none; line-height: 20px; color: #444; }
.navtabs span { width: 24px; padding-bottom: 4px; height: 27px; }
.navtabs .on { color: #2b579a; font-weight: 700; border-bottom: 3px solid #2b579a; width: 26px; margin-right: -2px; }
.tree { flex: 1; min-height: 0; overflow: hidden; margin: 2px 0 0 -14px; }
.row { height: 21px; line-height: 21px; color: #444; display: flex; align-items: center; white-space: nowrap; }
.first { margin-top: -8.500px; }
.slot { width: 16px; height: 21px; flex: none; display: flex; align-items: center; }
.tr { width: 7px; height: 7px; }
.l1 { padding-left: 20px; }
.l3 { padding-left: 51px; }
.l4 { padding-left: 67px; }
.l5 { padding-left: 83px; }
.l6 { padding-left: 99px; }
.l7 { padding-left: 115px; }
.rsel { margin-left: 94px; width: 221px; padding-left: 5px; background: #c0d4f2; height: 20px; margin-bottom: 1px; }

.docw { flex: 1; min-width: 0; background: #e6e6e6; overflow: hidden; }
.rtop { height: 31px; display: flex; align-items: flex-start; }
.tabsel { width: 21px; height: 20px; margin: 4px 0 0 3px; background: #fff; box-shadow: 0 0 0 3px #dcdcdc; text-align: center; line-height: 18px; font-size: 11px; font-weight: 700; color: #444; flex: none; }
.p3 { width: 1105px; height: 773px; margin-left: 240px; border-width: 0 1px; padding-left: 232px; }
.scanbg { position: absolute; left: 130px; top: 0; width: 826px; height: 686px; background: #fefefc; }
.scan {
  position: relative; display: grid; font-size: 14.670px; color: #3a3a3a; filter: blur(.3px);
  grid-template-rows: 26.300px 26px 25px 26px 25.700px 25.300px 25.700px 25.300px 25.700px 25.300px 48.700px 46.300px 26px 24px 24px 24px 24.700px 24px 47.300px 24.700px 48.300px 24px;
}
.scan p { margin: 0; height: 24px; line-height: 24px; white-space: pre; }
.i1 { padding-left: 28px; }
.i2 { padding-left: 30px; }
.bd { font-weight: 700; color: #222; }
.pg { padding-left: 657px; }
.m2 { font-family: "Liberation Serif", serif; font-size: 14.670px; letter-spacing: .4px; word-spacing: 3.500px; font-weight: 400; }
.wm { position: absolute; color: #b9cde7; white-space: nowrap; transform: rotate(30deg); transform-origin: 0 50%; line-height: 40px; height: 40px; filter: blur(.25px); }
.wm-a { left: 356px; top: 63px; font-size: 32px; letter-spacing: 6.700px; }
.wm-b { left: 368px; top: 137px; font-size: 27px; letter-spacing: 1.700px; }
.wm-c { left: 368px; top: -207px; font-size: 27px; letter-spacing: 1.700px; }
.wm-k { margin-right: 42px; }
```
